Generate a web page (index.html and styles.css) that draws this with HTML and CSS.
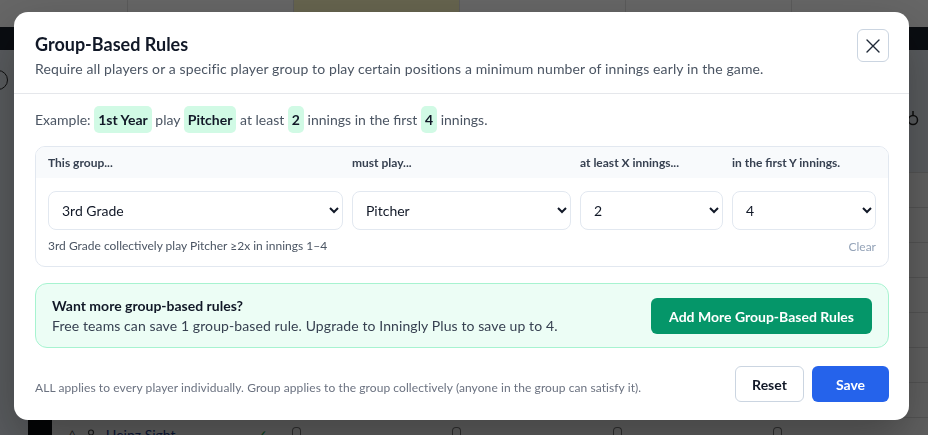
FILE: index.html
```html
<!DOCTYPE html>
<html lang="en">
<head>
    <meta charset="UTF-8">
    <meta name="viewport" content="width=device-width, initial-scale=1.0">
    <title>Group-Based Rules</title>
    <link rel="stylesheet" href="styles.css">
</head>
<body>
    <!-- page behind the dialog -->
    <div class="app">
        <div class="top-cells">
            <div class="cell cell-first"></div>
            <div class="cell"></div>
            <div class="cell cell-today"></div>
            <div class="cell"></div>
            <div class="cell"></div>
            <div class="cell"></div>
        </div>
        <div class="nav-bar"></div>
        <div class="page">
            <div class="page-head">
                <div class="help-icon"></div>
                <svg class="print-icon" width="14" height="16" viewBox="0 0 14 16" fill="none" stroke="#222" stroke-width="1.5">
                    <circle cx="7" cy="10" r="4.5"/>
                    <path d="M7 1v4"/>
                </svg>
            </div>
            <div class="rows">
                <div class="row"><div class="handle"></div></div>
                <div class="row"><div class="handle"></div></div>
                <div class="row"><div class="handle"></div></div>
                <div class="row"><div class="handle"></div></div>
                <div class="row"><div class="handle"></div></div>
                <div class="row"><div class="handle"></div></div>
                <div class="row"><div class="handle"></div></div>
                <div class="row">
                    <div class="handle"></div>
                    <div class="name-cell">
                        <span class="chev">^</span>
                        <svg width="10" height="12" viewBox="0 0 10 12" fill="none" stroke="#444" stroke-width="1.2">
                            <circle cx="5" cy="3.5" r="2.5"/>
                            <path d="M1 11c0-3 2-4 4-4s4 1 4 4"/>
                        </svg>
                        <span class="player">Heinz Sight</span>
                    </div>
                    <div class="check-cell">&#10003;</div>
                    <div class="lock-cell"><span class="lock"></span></div>
                    <div class="lock-cell"><span class="lock"></span></div>
                    <div class="lock-cell"><span class="lock"></span></div>
                    <div class="lock-cell"><span class="lock"></span></div>
                </div>
            </div>
        </div>
    </div>

    <div class="overlay">
        <div class="modal">
            <div class="modal-head">
                <div>
                    <h2>Group-Based Rules</h2>
                    <p class="subtitle">Require all players or a specific player group to play certain positions a minimum number of innings early in the game.</p>
                </div>
                <button class="close-btn" aria-label="Close">
                    <svg width="24" height="24" viewBox="0 0 24 24" fill="none" stroke="#1f2937" stroke-width="1.4" stroke-linecap="round">
                        <path d="M6 6l12 12M18 6L6 18"/>
                    </svg>
                </button>
            </div>

            <div class="modal-body">
                <p class="example">Example: <span class="chip">1st Year</span> play <span class="chip">Pitcher</span> at least <span class="chip">2</span> innings in the first <span class="chip">4</span> innings.</p>

                <div class="rule-card">
                    <div class="rule-labels">
                        <span>This group...</span>
                        <span>must play...</span>
                        <span>at least X innings...</span>
                        <span>in the first Y innings.</span>
                    </div>
                    <div class="rule-fields">
                        <select><option>3rd Grade</option><option>1st Year</option><option>ALL</option></select>
                        <select><option>Pitcher</option><option>Catcher</option></select>
                        <select><option>2</option><option>1</option><option>3</option></select>
                        <select><option>4</option><option>3</option><option>5</option></select>
                    </div>
                    <div class="rule-foot">
                        <span>3rd Grade collectively play Pitcher &ge;2x in innings 1&ndash;4</span>
                        <button class="clear-btn">Clear</button>
                    </div>
                </div>

                <div class="promo">
                    <div>
                        <h3>Want more group-based rules?</h3>
                        <p>Free teams can save 1 group-based rule. Upgrade to Inningly Plus to save up to 4.</p>
                    </div>
                    <button class="upgrade-btn">Add More Group-Based Rules</button>
                </div>
            </div>

            <div class="modal-foot">
                <p class="foot-note">ALL applies to every player individually. Group applies to the group collectively (anyone in the group can satisfy it).</p>
                <div class="actions">
                    <button class="btn btn-reset">Reset</button>
                    <button class="btn btn-save">Save</button>
                </div>
            </div>
        </div>
    </div>
</body>
</html>
```

FILE: styles.css
```css
body {
    margin: 0;
    font-family: Lato, "Noto Sans", sans-serif;
    height: 435px;
    overflow: hidden;
}

/* background app */
.app {
    height: 435px;
    display: flex;
    flex-direction: column;
    background: #dfe5ec;
}

.top-cells {
    height: 27px;
    display: flex;
    background: #ffffff;
    flex: none;
}

.cell {
    width: 165px;
    flex: none;
    border-right: 1px solid #e3e3e3;
}

.cell-first {
    width: 127px;
}

.cell-today {
    background: #fef9c4;
}

.nav-bar {
    height: 23px;
    background: #19202b;
    flex: none;
}

.page {
    flex: 1;
    display: flex;
    flex-direction: column;
}

.page-head {
    height: 122px;
    display: flex;
    justify-content: space-between;
    align-items: flex-start;
}

.help-icon {
    width: 18px;
    height: 18px;
    margin: 20px 0 0 -12px;
    border: 1.5px solid #222;
    border-radius: 50%;
}

.print-icon {
    margin: 60px 8px 0 0;
}

.rows {
    margin-left: 28px;
    background: #f0f0f0;
    border-top: 1px solid #d2d2d2;
}

.row {
    height: 34px;
    display: flex;
    align-items: center;
    border-bottom: 1px solid #d2d2d2;
}

.row:last-child {
    align-items: flex-start;
    padding-top: 9px;
    box-sizing: border-box;
}

.handle {
    width: 24px;
    align-self: stretch;
    margin-top: -9px;
    background: #0b0d10;
}

.row:not(:last-child) .handle {
    margin-top: 0;
}

.name-cell {
    width: 196px;
    display: flex;
    align-items: center;
    gap: 10px;
    padding-left: 17px;
    box-sizing: border-box;
    font-size: 14px;
    line-height: 16px;
    color: #1e293b;
}

.chev {
    color: #555;
    font-size: 12px;
}

.player {
    color: #1e3a8a;
}

.check-cell {
    width: 40px;
    padding-left: 10px;
    box-sizing: border-box;
    color: #16a34a;
    font-size: 14px;
    line-height: 16px;
}

.lock-cell {
    width: 162px;
    padding-left: 6px;
    box-sizing: border-box;
}

.lock {
    display: block;
    width: 7px;
    height: 8px;
    border: 1.5px solid #777;
    border-bottom: 0;
    border-radius: 4px 4px 0 0;
}

/* dialog */
.overlay {
    position: fixed;
    inset: 0;
    background: rgba(0, 0, 0, 0.6);
    display: flex;
    align-items: flex-start;
    padding: 12px 0 0 14px;
}

.modal {
    width: 895px;
    background: #ffffff;
    border-radius: 14px;
    box-shadow: 0 20px 50px rgba(0, 0, 0, 0.3);
    overflow: hidden;
}

.modal-head {
    display: flex;
    justify-content: space-between;
    align-items: flex-start;
    padding: 20px 20px 14px 21px;
    border-bottom: 1px solid #e5e7eb;
}

.modal-head h2 {
    margin: 0;
    font-size: 18px;
    line-height: 24px;
    font-weight: 700;
    color: #111827;
}

.subtitle {
    margin: 3px 0 0;
    font-size: 14px;
    line-height: 20px;
    letter-spacing: 0.12px;
    color: #4b5563;
}

.close-btn {
    width: 32px;
    height: 33px;
    margin-top: -3px;
    padding: 0;
    display: flex;
    align-items: center;
    justify-content: center;
    background: #ffffff;
    border: 1px solid #cbd5e1;
    border-radius: 6px;
}

.modal-body {
    padding: 12px 20px 0 21px;
}

.example {
    margin: 0;
    font-size: 14px;
    line-height: 27px;
    color: #4b5563;
}

.chip {
    display: inline-block;
    padding: 4px 4px;
    line-height: 19px;
    background: #d1fae5;
    border-radius: 5px;
    font-weight: 700;
    color: #111827;
}

.rule-card {
    margin-top: 13px;
    border: 1px solid #e2e8f0;
    border-radius: 10px;
    overflow: hidden;
}

.rule-labels,
.rule-fields {
    display: grid;
    grid-template-columns: 295px 219px 143px 1fr;
    gap: 9px;
}

.rule-labels {
    padding: 8px 12px;
    background: #f8fafc;
    font-size: 12px;
    line-height: 15px;
    font-weight: 700;
    color: #374151;
}

.rule-fields {
    padding: 13px 12px 0;
}

.rule-fields select {
    height: 39px;
    padding: 0 3px 0 9px;
    border: 1px solid #e2e8f0;
    border-radius: 8px;
    background: #ffffff;
    font-family: inherit;
    font-size: 14px;
    color: #111827;
}

.rule-foot {
    display: flex;
    justify-content: space-between;
    align-items: center;
    padding: 8px 12px 12px;
    font-size: 12px;
    line-height: 16px;
    color: #4b5563;
}

.clear-btn {
    padding: 0;
    border: 0;
    background: none;
    font-family: inherit;
    font-size: 12px;
    color: #94a3b8;
}

.promo {
    margin-top: 16px;
    display: flex;
    justify-content: space-between;
    align-items: center;
    padding: 12px 16px 11px;
    background: #ecfdf5;
    border: 1px solid #a7f3d0;
    border-radius: 12px;
}

.promo h3 {
    margin: 0;
    font-size: 14px;
    line-height: 20px;
    font-weight: 700;
    color: #111827;
}

.promo p {
    margin: 0;
    font-size: 14px;
    line-height: 20px;
    letter-spacing: 0.1px;
    color: #374151;
}

.upgrade-btn {
    height: 36px;
    padding: 0 18px;
    border: 0;
    border-radius: 6px;
    background: #059669;
    color: #ffffff;
    font-family: inherit;
    font-size: 14px;
    font-weight: 700;
}

.modal-foot {
    display: flex;
    justify-content: space-between;
    align-items: center;
    padding: 18px 20px 18px 21px;
}

.foot-note {
    margin: 0;
    padding-top: 6px;
    font-size: 12px;
    letter-spacing: 0.08px;
    color: #6b7280;
}

.actions {
    display: flex;
    gap: 8px;
}

.btn {
    height: 36px;
    border-radius: 6px;
    font-family: inherit;
    font-size: 14px;
    font-weight: 700;
}

.btn-reset {
    width: 69px;
    background: #ffffff;
    border: 1px solid #cbd5e1;
    color: #111827;
}

.btn-save {
    width: 77px;
    background: #2563eb;
    border: 0;
    color: #ffffff;
}
```
